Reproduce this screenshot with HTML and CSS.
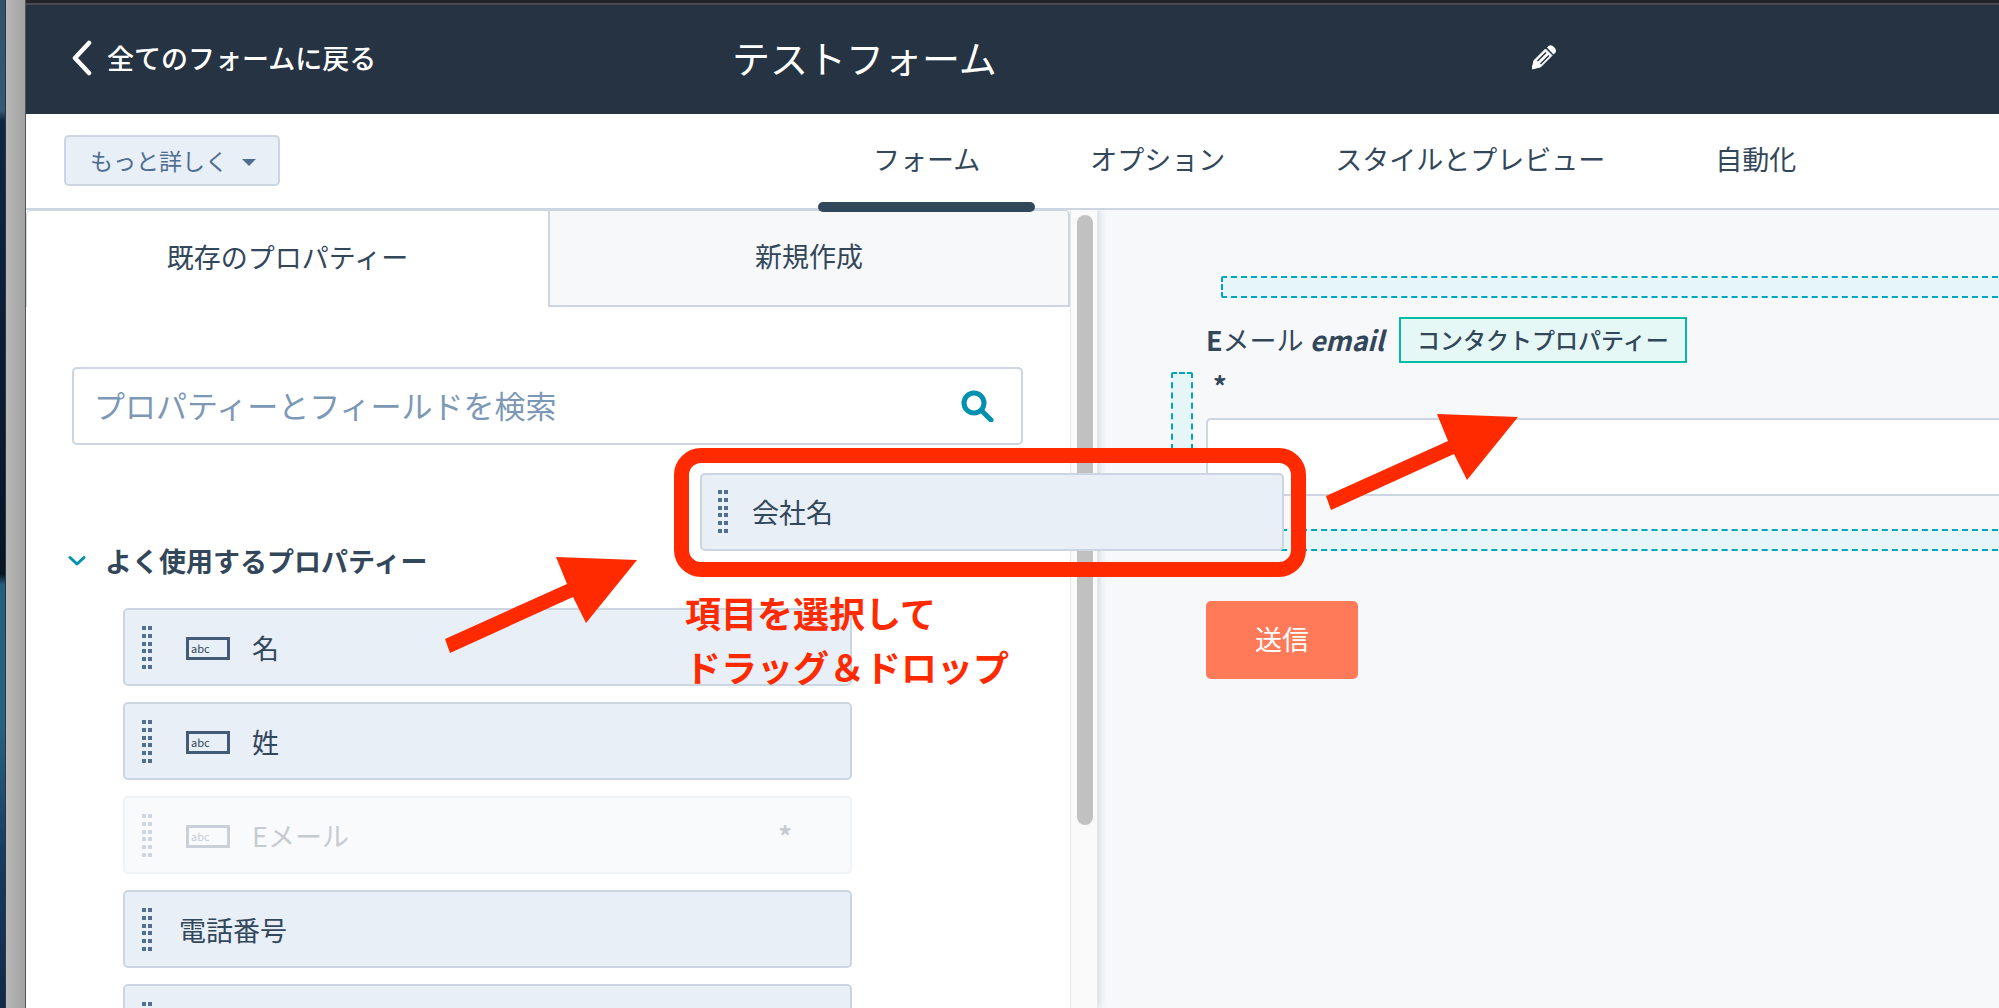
FILE: index.html
```html
<!DOCTYPE html>
<html lang="ja">
<head>
<meta charset="utf-8">
<title>テストフォーム</title>
<link rel="stylesheet" href="styles.css">
</head>
<body>
<svg class="defs" aria-hidden="true">
  <symbol id="grip" viewBox="0 0 11 44">
    <path d="M0 0h4v4H0zM6 0h4v4H6zM0 8h4v4H0zM6 8h4v4H6zM0 16h4v4H0zM6 16h4v4H6zM0 23h4v4H0zM6 23h4v4H6zM0 31h4v4H0zM6 31h4v4H6zM0 39h4v4H0zM6 39h4v4H6z" fill="#516f90"/>
  </symbol>
</svg>
<div class="desktop">
  <div class="wallpaper"></div>
  <div class="bezel"></div>
  <div class="app">
    <header class="header">
      <a class="back" href="#">
        <svg width="20" height="36" viewBox="0 0 20 36"><path d="M17 3 3 18 17 33" fill="none" stroke="#fff" stroke-width="4.500" stroke-linecap="round" stroke-linejoin="round"/></svg>
        全てのフォームに戻る
      </a>
      <h1 class="title">テストフォーム</h1>
      <button class="edit" aria-label="名前を編集">
        <svg width="25" height="25" viewBox="0 0 25 25"><path d="M0 24 2 15.500 13.500 4 20 10.500 8.500 22Z" fill="#fff" stroke="#fff" stroke-linejoin="round"/><path d="M15 2.500 16.500 1Q19 -1 22 2T23.500 7.500L21.500 9.500Z" fill="#fff"/><path d="M5.500 16 14 7.500M8.500 19 17 10.500" stroke="#253342" stroke-width="1.500" fill="none"/></svg>
      </button>
    </header>
    <nav class="nav">
      <div><button class="more">もっと詳しく<span class="caret"></span></button></div>
      <div class="tabs">
        <a class="tab active" href="#">フォーム</a>
        <a class="tab" href="#">オプション</a>
        <a class="tab" href="#">スタイルとプレビュー</a>
        <a class="tab" href="#">自動化</a>
      </div>
    </nav>
    <main class="main">
      <aside class="sidebar">
        <div class="panel">
          <div class="switch" role="tablist">
            <button class="choice chosen" role="tab" aria-selected="true">既存のプロパティー</button>
            <button class="choice" role="tab" aria-selected="false">新規作成</button>
          </div>
          <div class="search">
            <input type="text" placeholder="プロパティーとフィールドを検索" aria-label="プロパティーとフィールドを検索">
            <svg width="34" height="34" viewBox="0 0 34 34"><circle cx="14" cy="15" r="10" fill="none" stroke="#0091ae" stroke-width="5"/><path d="M22 23 31 32" stroke="#0091ae" stroke-width="5" stroke-linecap="round"/></svg>
          </div>
          <button class="group" aria-expanded="true">
            <svg width="18" height="12" viewBox="0 0 18 12"><path d="M2 2.500 9 9 16 2.500" fill="none" stroke="#0091ae" stroke-width="3" stroke-linecap="round" stroke-linejoin="round"/></svg>
            よく使用するプロパティー
          </button>
          <ul class="cards">
            <li class="card"><svg class="grip"><use href="#grip"/></svg><span class="abc">abc</span>名</li>
            <li class="card"><svg class="grip"><use href="#grip"/></svg><span class="abc">abc</span>姓</li>
            <li class="card used"><svg class="grip"><use href="#grip"/></svg><span class="abc">abc</span>Eメール<span class="star">*</span></li>
            <li class="card"><svg class="grip"><use href="#grip"/></svg>電話番号</li>
            <li class="card"><svg class="grip"><use href="#grip"/></svg></li>
          </ul>
        </div>
        <div class="track"><div class="thumb"></div></div>
      </aside>
      <section class="canvas">
        <div class="drop"></div>
        <div class="field">
          <div class="drop side"></div>
          <label class="label" for="email"><span><b>E</b>メール <b><i>email</i></b></span><span class="badge">コンタクトプロパティー</span></label>
          <span class="required">*</span>
          <input class="input" id="email" type="email">
        </div>
        <div class="drop"></div>
        <button class="submit">送信</button>
      </section>
    </main>
  </div>
  <div class="card dragged"><svg class="grip"><use href="#grip"/></svg>会社名</div>
  <div class="ring"></div>
  <svg class="arrow first" viewBox="0 0 192 96"><path id="arrow" d="M0 82 122 27 111 0 192 3 141 66 128 40 5 96Z" fill="#ff2a00"/></svg>
  <svg class="arrow second" viewBox="0 0 192 96"><use href="#arrow"/></svg>
  <p class="note">項目を選択して<br>ドラッグ＆ドロップ</p>
</div>
</body>
</html>
```
FILE: styles.css
```css
* { box-sizing: border-box; }

body {
  margin: 0;
  color: #33475b;
  font: 27px/40px "Noto Sans CJK JP", sans-serif;
}

button, input { font: inherit; color: inherit; }
button { border: 0; background: none; padding: 0; }
a { color: inherit; text-decoration: none; }
svg { flex: none; display: block; }
.defs { position: absolute; width: 0; height: 0; }

/* window on the desktop */
.desktop {
  position: relative;
  display: grid;
  grid-template-columns: 5px 21px minmax(0, 1fr);
  height: 100vh;
  overflow: hidden;
}
.wallpaper {
  background: linear-gradient(#2f5270, #35597a 11%, #0c2746 12%, #0a1d38 35%, #081528 57%, #226080 58%, #256383 72%, #153c62 85%, #0e2a4c 100%);
}
.bezel {
  border: solid #333;
  border-width: 0 1px;
  border-right-color: #555;
  background: linear-gradient(90deg, #b8b8b8, #a2a2a2);
}
.app {
  display: grid;
  grid-template-rows: 114px 96px minmax(0, 1fr);
  min-width: 0;
  min-height: 0;
}

.header {
  display: grid;
  grid-template-columns: 706fr 800fr 467fr;
  align-items: center;
  padding-bottom: 1px;
  border-top: 3px solid #242428;
  box-shadow: inset 0 2px #4a4a50;
  background: #253342;
  color: #fff;
}
.back {
  display: flex;
  align-items: center;
  gap: 15px;
  padding-left: 46px;
  font-weight: 500;
}
.title { margin: 0; padding-bottom: 3px; font-size: 38px; font-weight: 400; }
.edit { justify-self: start; padding-bottom: 2px; }

.nav {
  display: grid;
  grid-template-columns: 792fr 1181fr;
  border-bottom: 2px solid #cbd6e2;
  background: #fff;
}
.more {
  display: flex;
  align-items: center;
  gap: 14px;
  height: 51px;
  margin: 21px 0 0 38px;
  padding: 0 22px 2px 24px;
  border: 2px solid #cbd6e2;
  border-radius: 5px;
  background: #e8eff7;
  color: #506e91;
  font-size: 23px;
}
.caret {
  margin-top: 6px;
  border: 7px solid transparent;
  border-top-color: #506e91;
  border-bottom: 0;
}
.tabs { display: flex; }
.tab {
  position: relative;
  padding: 25px 55px 0;
  white-space: nowrap;
}
.active::after {
  content: "";
  position: absolute;
  inset: auto 0 -4px;
  height: 10px;
  border-radius: 5px;
  background: #33475b;
  z-index: 2;
}

.main {
  display: grid;
  grid-template-columns: 1072fr 901fr;
  min-height: 0;
}
.sidebar {
  position: relative;
  z-index: 1;
  display: grid;
  grid-template-columns: minmax(0, 1fr) 28px;
  min-height: 0;
  background: #fff;
  box-shadow: 0 0 8px #b9cbdc;
  clip-path: inset(0 -12px 0 0);
}
.panel { min-width: 0; overflow: hidden; }
.switch { display: grid; grid-template-columns: 1fr 1fr; }
.choice {
  height: 97px;
  padding-bottom: 4px;
  border: solid #cbd6e2;
  border-width: 1px 2px 2px;
  border-top-right-radius: 5px;
  background: #f6f8fa;
}
.chosen {
  border-width: 1px 0 0 1px;
  border-radius: 5px 0 0;
  background: #fff;
}
.search {
  display: flex;
  align-items: center;
  height: 78px;
  margin: 60px 47px 0 46px;
  padding: 0 27px 2px 20px;
  border: 2px solid #cbd6e2;
  border-radius: 5px;
  font-size: 31px;
}
.search input {
  flex: 1;
  min-width: 0;
  padding: 0;
  border: 0;
  outline: 0;
  background: none;
}
.search input::placeholder { color: #7c98b6; opacity: 1; }
.group {
  display: flex;
  align-items: center;
  gap: 19px;
  margin: 96px 0 0 42px;
  font-weight: 700;
}
.cards {
  display: grid;
  gap: 16px;
  margin: 27px 218px 0 97px;
  padding: 0;
  list-style: none;
}
.card {
  display: flex;
  align-items: center;
  height: 78px;
  padding: 1px 58px 0 17px;
  border: 2px solid #cbd6e2;
  border-radius: 5px;
  background: #e8eff7;
}
.grip { width: 11px; height: 44px; margin-right: 26px; }
.abc {
  width: 44px;
  height: 23px;
  margin: 2px 22px 0 7px;
  padding-left: 2px;
  border: 3px solid #425b76;
  font-size: 11px;
  line-height: 16px;
}
.used { opacity: .28; }
.star { margin-left: auto; font-weight: 700; }

.track {
  padding: 5px 4px 0 6px;
  border: solid #e8e8e8;
  border-width: 0 1px;
  background: #fafafa;
}
.thumb { height: 610px; border-radius: 8px; background: #c1c1c1; }

.canvas {
  min-width: 0;
  padding: 66px 0 0 108px;
  overflow: hidden;
  background: #f6f8fa;
}
.drop {
  height: 22px;
  margin: 0 -9px 0 15px;
  border: 2px dashed #00a4bd;
  border-radius: 2px;
  background: #e5f5f8;
}
.field { position: relative; margin: 19px 0 33px; }
.side {
  position: absolute;
  left: -35px;
  top: 55px;
  width: 22px;
  height: 78px;
  margin: 0;
}
.label {
  display: flex;
  align-items: center;
  gap: 15px;
  height: 46px;
  white-space: nowrap;
}
.badge {
  padding: 0 16px 2px;
  border: 2px solid #00bda5;
  background: #e5f8f6;
  font-size: 23px;
  font-weight: 500;
}
.required {
  display: block;
  height: 55px;
  padding: 3px 0 0 7px;
  font-weight: 700;
}
.input {
  display: block;
  width: calc(100% + 9px);
  height: 78px;
  border: 2px solid #cbd6e2;
  border-radius: 5px;
  background: #fff;
}
.submit {
  width: 152px;
  height: 78px;
  margin-top: 50px;
  padding-bottom: 3px;
  border-radius: 5px;
  background: #ff7a59;
  color: #fff;
}

/* drag preview and annotations lie over the page */
.dragged { position: absolute; z-index: 3; left: 700px; top: 473px; width: 584px; padding: 0 16px; }
.dragged .grip { margin-right: 23px; }
.ring {
  position: absolute;
  z-index: 3;
  left: 674px;
  top: 448px;
  width: 632px;
  height: 129px;
  border: 15px solid #ff2a00;
  border-radius: 27px;
}
.arrow { position: absolute; z-index: 3; width: 192px; height: 96px; }
.first { left: 445px; top: 557px; }
.second { left: 1326px; top: 414px; }
.note {
  position: absolute;
  z-index: 3;
  left: 685px;
  top: 585px;
  margin: 0;
  color: #ff2a00;
  font-size: 36px;
  font-weight: 700;
  line-height: 54px;
}
```
